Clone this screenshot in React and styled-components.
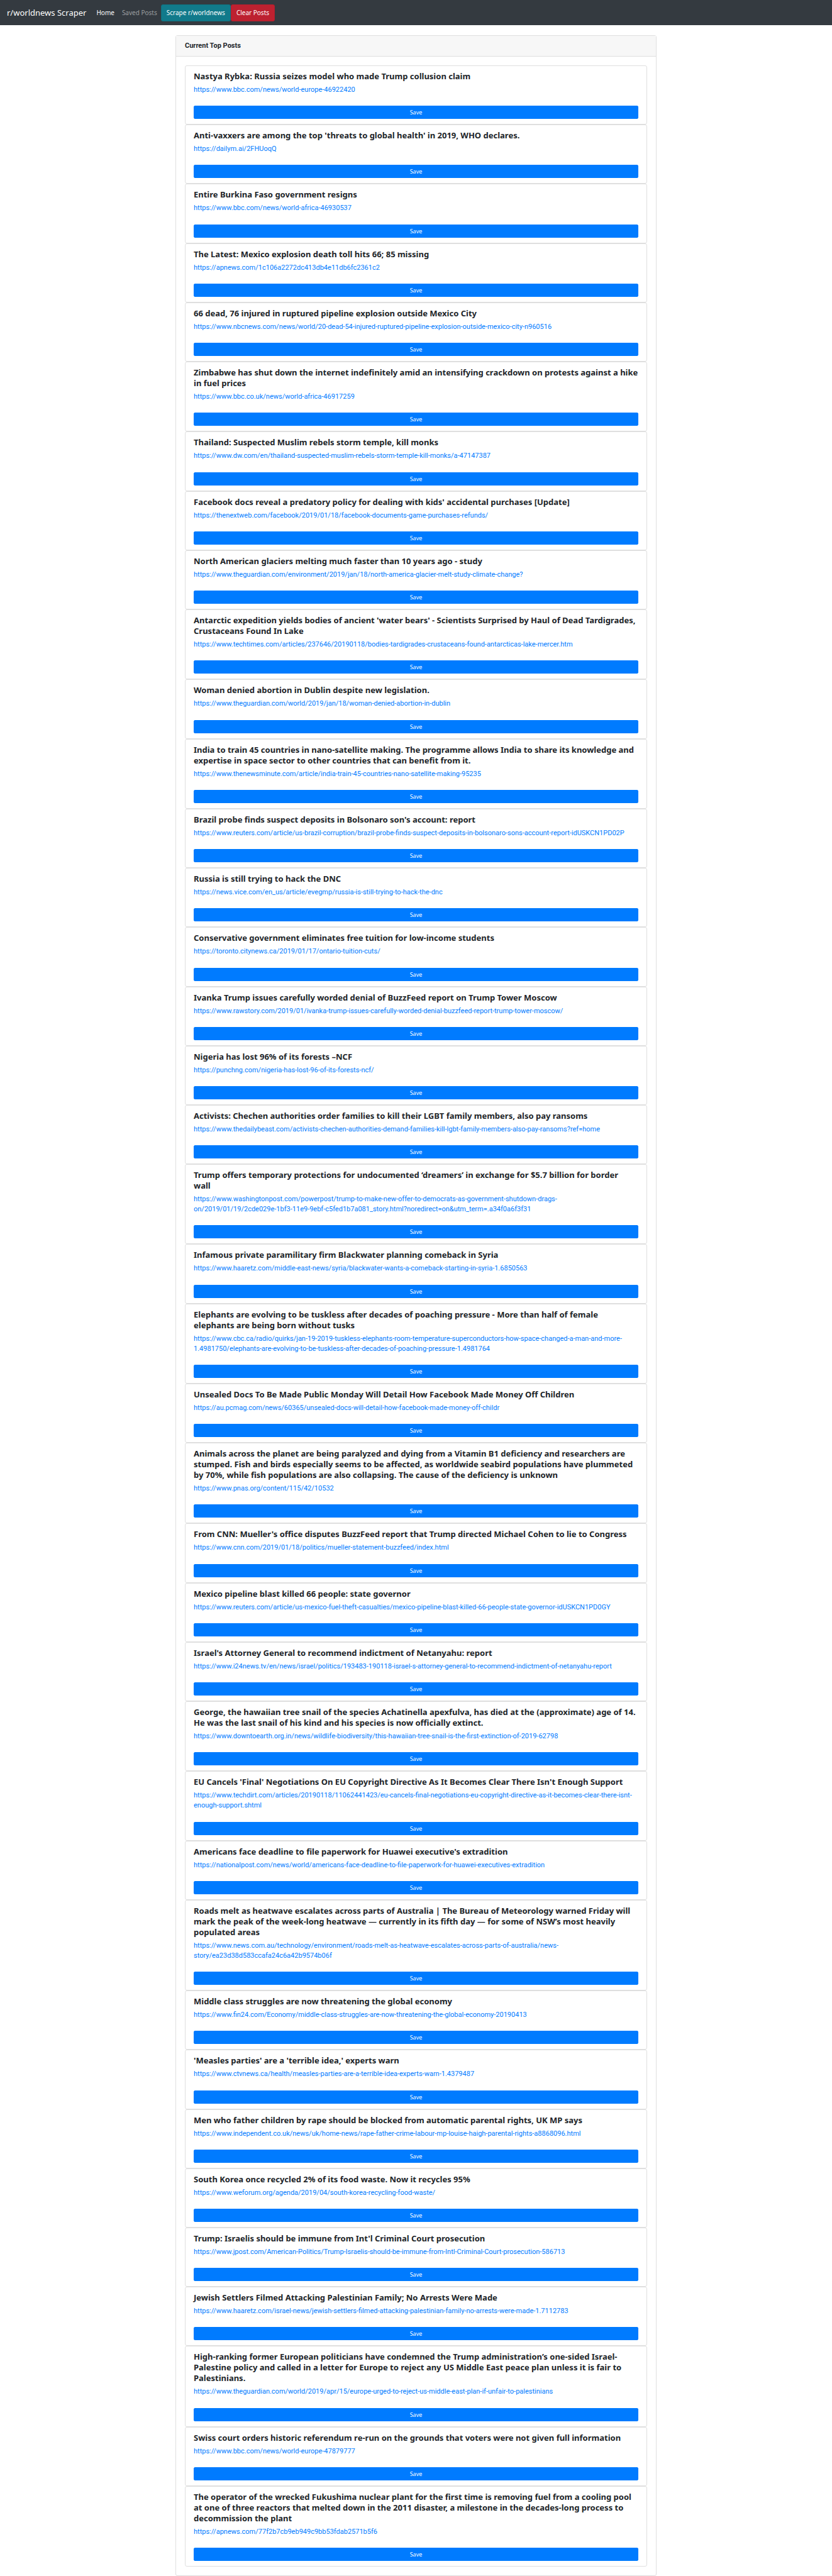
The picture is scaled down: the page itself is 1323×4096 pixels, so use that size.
import React from "react";
import styled, { createGlobalStyle } from "styled-components";

const humanist = `"Noto Sans", "Open Sans", sans-serif`;
const body = `Roboto, "Noto Sans", sans-serif`;

const GlobalStyle = createGlobalStyle`
  *, *::before, *::after { box-sizing: border-box; }
  body {
    margin: 0;
    background: #fff;
    color: #212529;
    font-family: ${body};
    font-size: 11px;
    line-height: 16px;
  }
`;

const Page = styled.div`
  display: flex;
  flex-direction: column;
  min-height: 100vh;
`;

const Navbar = styled.nav`
  display: flex;
  align-items: center;
  padding: 6px 11px;
  background: #343a40;
  font-family: ${humanist};
`;

const Brand = styled.a`
  margin-right: 10px;
  color: #fff;
  font-size: 13px;
  line-height: 21px;
  text-decoration: none;
  white-space: nowrap;
`;

const NavList = styled.ul`
  display: flex;
  align-items: center;
  margin: 0;
  padding: 0;
  list-style: none;
`;

const NavLink = styled.a`
  display: block;
  padding: 6px;
  color: ${({ $active }) => ($active ? "#fff" : "rgba(255, 255, 255, 0.5)")};
  font-size: 10px;
  line-height: 16px;
  text-decoration: none;
  white-space: nowrap;
`;

const tones = {
  info: { fill: "#117a8b", edge: "#10707f" },
  danger: { fill: "#bd2130", edge: "#b21f2d" },
};

const NavButton = styled.button`
  display: block;
  height: 27px;
  padding: 0 8px;
  border: 1px solid ${({ $tone }) => tones[$tone].edge};
  border-radius: 3px;
  background: ${({ $tone }) => tones[$tone].fill};
  color: #fff;
  font: 400 10px/16px ${humanist};
  white-space: nowrap;
  cursor: pointer;
`;

const Container = styled.main`
  display: flex;
  flex: 1;
  flex-direction: column;
  width: 100%;
  max-width: 765px;
  margin: 16px auto 0;
`;

const Panel = styled.section`
  display: flex;
  flex: 1;
  flex-direction: column;
  border: 1px solid #dfdfdf;
  border-radius: 3px;
`;

const PanelHeader = styled.header`
  padding: 8px 14px;
  border-bottom: 1px solid #dfdfdf;
  background: #f7f7f7;
`;

const PanelTitle = styled.h1`
  margin: 0;
  font-size: 11px;
  font-weight: 700;
  line-height: 16px;
`;

const PostList = styled.div`
  display: flex;
  flex: 1;
  flex-direction: column;
  padding: 14px;
`;

const PostCard = styled.article`
  display: flex;
  flex: 1 0 auto;
  flex-direction: column;
  padding: 8px 13px;
  border: 1px solid #dfdfdf;
  border-radius: 3px;
`;

const PostTitle = styled.h2`
  margin: 0 0 5px;
  font: 700 13px/17px ${humanist};
  white-space: pre-line;
`;

const PostLink = styled.a`
  align-self: flex-start;
  margin-bottom: 17px;
  color: #007bff;
  text-decoration: none;
`;

const SaveButton = styled.button`
  width: 100%;
  height: 21px;
  margin-top: auto;
  padding: 0;
  border: 1px solid #007bff;
  border-radius: 2px;
  background: #007bff;
  color: #fff;
  font: 400 9px/15px ${humanist};
  cursor: pointer;
`;

const posts = [
  ["Nastya Rybka: Russia seizes model who made Trump collusion claim", "https://www.bbc.com/news/world-europe-46922420"],
  ["Anti-vaxxers are among the top 'threats to global health' in 2019, WHO declares.", "https://dailym.ai/2FHUoqQ"],
  ["Entire Burkina Faso government resigns", "https://www.bbc.com/news/world-africa-46930537"],
  ["The Latest: Mexico explosion death toll hits 66; 85 missing", "https://apnews.com/1c106a2272dc413db4e11db6fc2361c2"],
  ["66 dead, 76 injured in ruptured pipeline explosion outside Mexico City", "https://www.nbcnews.com/news/world/20-dead-54-injured-ruptured-pipeline-explosion-outside-mexico-city-n960516"],
  ["Zimbabwe has shut down the internet indefinitely amid an intensifying crackdown on protests against a hike in fuel prices", "https://www.bbc.co.uk/news/world-africa-46917259"],
  ["Thailand: Suspected Muslim rebels storm temple, kill monks", "https://www.dw.com/en/thailand-suspected-muslim-rebels-storm-temple-kill-monks/a-47147387"],
  ["Facebook docs reveal a predatory policy for dealing with kids' accidental purchases [Update]", "https://thenextweb.com/facebook/2019/01/18/facebook-documents-game-purchases-refunds/"],
  ["North American glaciers melting much faster than 10 years ago - study", "https://www.theguardian.com/environment/2019/jan/18/north-america-glacier-melt-study-climate-change?"],
  ["Antarctic expedition yields bodies of ancient 'water bears' - Scientists Surprised by Haul of Dead Tardigrades, Crustaceans Found In Lake", "https://www.techtimes.com/articles/237646/20190118/bodies-tardigrades-crustaceans-found-antarcticas-lake-mercer.htm"],
  ["Woman denied abortion in Dublin despite new legislation.", "https://www.theguardian.com/world/2019/jan/18/woman-denied-abortion-in-dublin"],
  ["India to train 45 countries in nano-satellite making. The programme allows India to share its knowledge and expertise in space sector to other countries that can benefit from it.", "https://www.thenewsminute.com/article/india-train-45-countries-nano-satellite-making-95235"],
  ["Brazil probe finds suspect deposits in Bolsonaro son's account: report", "https://www.reuters.com/article/us-brazil-corruption/brazil-probe-finds-suspect-deposits-in-bolsonaro-sons-account-report-idUSKCN1PD02P"],
  ["Russia is still trying to hack the DNC", "https://news.vice.com/en_us/article/evegmp/russia-is-still-trying-to-hack-the-dnc"],
  ["Conservative government eliminates free tuition for low-income students", "https://toronto.citynews.ca/2019/01/17/ontario-tuition-cuts/"],
  ["Ivanka Trump issues carefully worded denial of BuzzFeed report on Trump Tower Moscow", "https://www.rawstory.com/2019/01/ivanka-trump-issues-carefully-worded-denial-buzzfeed-report-trump-tower-moscow/"],
  ["Nigeria has lost 96% of its forests –NCF", "https://punchng.com/nigeria-has-lost-96-of-its-forests-ncf/"],
  ["Activists: Chechen authorities order families to kill their LGBT family members, also pay ransoms", "https://www.thedailybeast.com/activists-chechen-authorities-demand-families-kill-lgbt-family-members-also-pay-ransoms?ref=home"],
  ["Trump offers temporary protections for undocumented ‘dreamers’ in exchange for $5.7 billion for border\nwall", "https://www.washingtonpost.com/powerpost/trump-to-make-new-offer-to-democrats-as-government-shutdown-drags-on/2019/01/19/2cde029e-1bf3-11e9-9ebf-c5fed1b7a081_story.html?noredirect=on&utm_term=.a34f0a6f3f31"],
  ["Infamous private paramilitary firm Blackwater planning comeback in Syria", "https://www.haaretz.com/middle-east-news/syria/blackwater-wants-a-comeback-starting-in-syria-1.6850563"],
  ["Elephants are evolving to be tuskless after decades of poaching pressure - More than half of female elephants are being born without tusks", "https://www.cbc.ca/radio/quirks/jan-19-2019-tuskless-elephants-room-temperature-superconductors-how-space-changed-a-man-and-more-1.4981750/elephants-are-evolving-to-be-tuskless-after-decades-of-poaching-pressure-1.4981764"],
  ["Unsealed Docs To Be Made Public Monday Will Detail How Facebook Made Money Off Children", "https://au.pcmag.com/news/60365/unsealed-docs-will-detail-how-facebook-made-money-off-childr"],
  ["Animals across the planet are being paralyzed and dying from a Vitamin B1 deficiency and researchers are stumped. Fish and birds especially seems to be affected, as worldwide seabird populations have plummeted by 70%, while fish populations are also collapsing. The cause of the deficiency is unknown", "https://www.pnas.org/content/115/42/10532"],
  ["From CNN: Mueller's office disputes BuzzFeed report that Trump directed Michael Cohen to lie to Congress", "https://www.cnn.com/2019/01/18/politics/mueller-statement-buzzfeed/index.html"],
  ["Mexico pipeline blast killed 66 people: state governor", "https://www.reuters.com/article/us-mexico-fuel-theft-casualties/mexico-pipeline-blast-killed-66-people-state-governor-idUSKCN1PD0GY"],
  ["Israel's Attorney General to recommend indictment of Netanyahu: report", "https://www.i24news.tv/en/news/israel/politics/193483-190118-israel-s-attorney-general-to-recommend-indictment-of-netanyahu-report"],
  ["George, the hawaiian tree snail of the species Achatinella apexfulva, has died at the (approximate) age of 14. He was the last snail of his kind and his species is now officially extinct.", "https://www.downtoearth.org.in/news/wildlife-biodiversity/this-hawaiian-tree-snail-is-the-first-extinction-of-2019-62798"],
  ["EU Cancels 'Final' Negotiations On EU Copyright Directive As It Becomes Clear There Isn't Enough Support", "https://www.techdirt.com/articles/20190118/11062441423/eu-cancels-final-negotiations-eu-copyright-directive-as-it-becomes-clear-there-isnt-enough-support.shtml"],
  ["Americans face deadline to file paperwork for Huawei executive's extradition", "https://nationalpost.com/news/world/americans-face-deadline-to-file-paperwork-for-huawei-executives-extradition"],
  ["Roads melt as heatwave escalates across parts of Australia | The Bureau of Meteorology warned Friday will mark the peak of the week-long heatwave — currently in its fifth day — for some of NSW’s most heavily populated areas", "https://www.news.com.au/technology/environment/roads-melt-as-heatwave-escalates-across-parts-of-australia/news-story/ea23d38d583ccafa24c6a42b9574b06f"],
  ["Middle class struggles are now threatening the global economy", "https://www.fin24.com/Economy/middle-class-struggles-are-now-threatening-the-global-economy-20190413"],
  ["'Measles parties' are a 'terrible idea,' experts warn", "https://www.ctvnews.ca/health/measles-parties-are-a-terrible-idea-experts-warn-1.4379487"],
  ["Men who father children by rape should be blocked from automatic parental rights, UK MP says", "https://www.independent.co.uk/news/uk/home-news/rape-father-crime-labour-mp-louise-haigh-parental-rights-a8868096.html"],
  ["South Korea once recycled 2% of its food waste. Now it recycles 95%", "https://www.weforum.org/agenda/2019/04/south-korea-recycling-food-waste/"],
  ["Trump: Israelis should be immune from Int'l Criminal Court prosecution", "https://www.jpost.com/American-Politics/Trump-Israelis-should-be-immune-from-Intl-Criminal-Court-prosecution-586713"],
  ["Jewish Settlers Filmed Attacking Palestinian Family; No Arrests Were Made", "https://www.haaretz.com/israel-news/jewish-settlers-filmed-attacking-palestinian-family-no-arrests-were-made-1.7112783"],
  ["High-ranking former European politicians have condemned the Trump administration’s one-sided Israel-Palestine policy and called in a letter for Europe to reject any US Middle East peace plan unless it is fair to Palestinians.", "https://www.theguardian.com/world/2019/apr/15/europe-urged-to-reject-us-middle-east-plan-if-unfair-to-palestinians"],
  ["Swiss court orders historic referendum re-run on the grounds that voters were not given full information", "https://www.bbc.com/news/world-europe-47879777"],
  ["The operator of the wrecked Fukushima nuclear plant for the first time is removing fuel from a cooling pool at one of three reactors that melted down in the 2011 disaster, a milestone in the decades-long process to decommission the plant", "https://apnews.com/77f2b7cb9eb949c9bb53fdab2571b5f6"],
];

function Post({ title, url }) {
  return (
    <PostCard>
      <PostTitle>{title}</PostTitle>
      <PostLink href={url}>{url}</PostLink>
      <SaveButton type="button">Save</SaveButton>
    </PostCard>
  );
}

export default function App() {
  return (
    <Page>
      <GlobalStyle />
      <Navbar>
        <Brand href="/">r/worldnews Scraper</Brand>
        <NavList>
          <li><NavLink href="/" $active>Home</NavLink></li>
          <li><NavLink href="/saved">Saved Posts</NavLink></li>
          <li><NavButton type="button" $tone="info">Scrape r/worldnews</NavButton></li>
          <li><NavButton type="button" $tone="danger">Clear Posts</NavButton></li>
        </NavList>
      </Navbar>
      <Container>
        <Panel>
          <PanelHeader>
            <PanelTitle>Current Top Posts</PanelTitle>
          </PanelHeader>
          <PostList>
            {posts.map(([title, url]) => (
              <Post key={url} title={title} url={url} />
            ))}
          </PostList>
        </Panel>
      </Container>
    </Page>
  );
}
